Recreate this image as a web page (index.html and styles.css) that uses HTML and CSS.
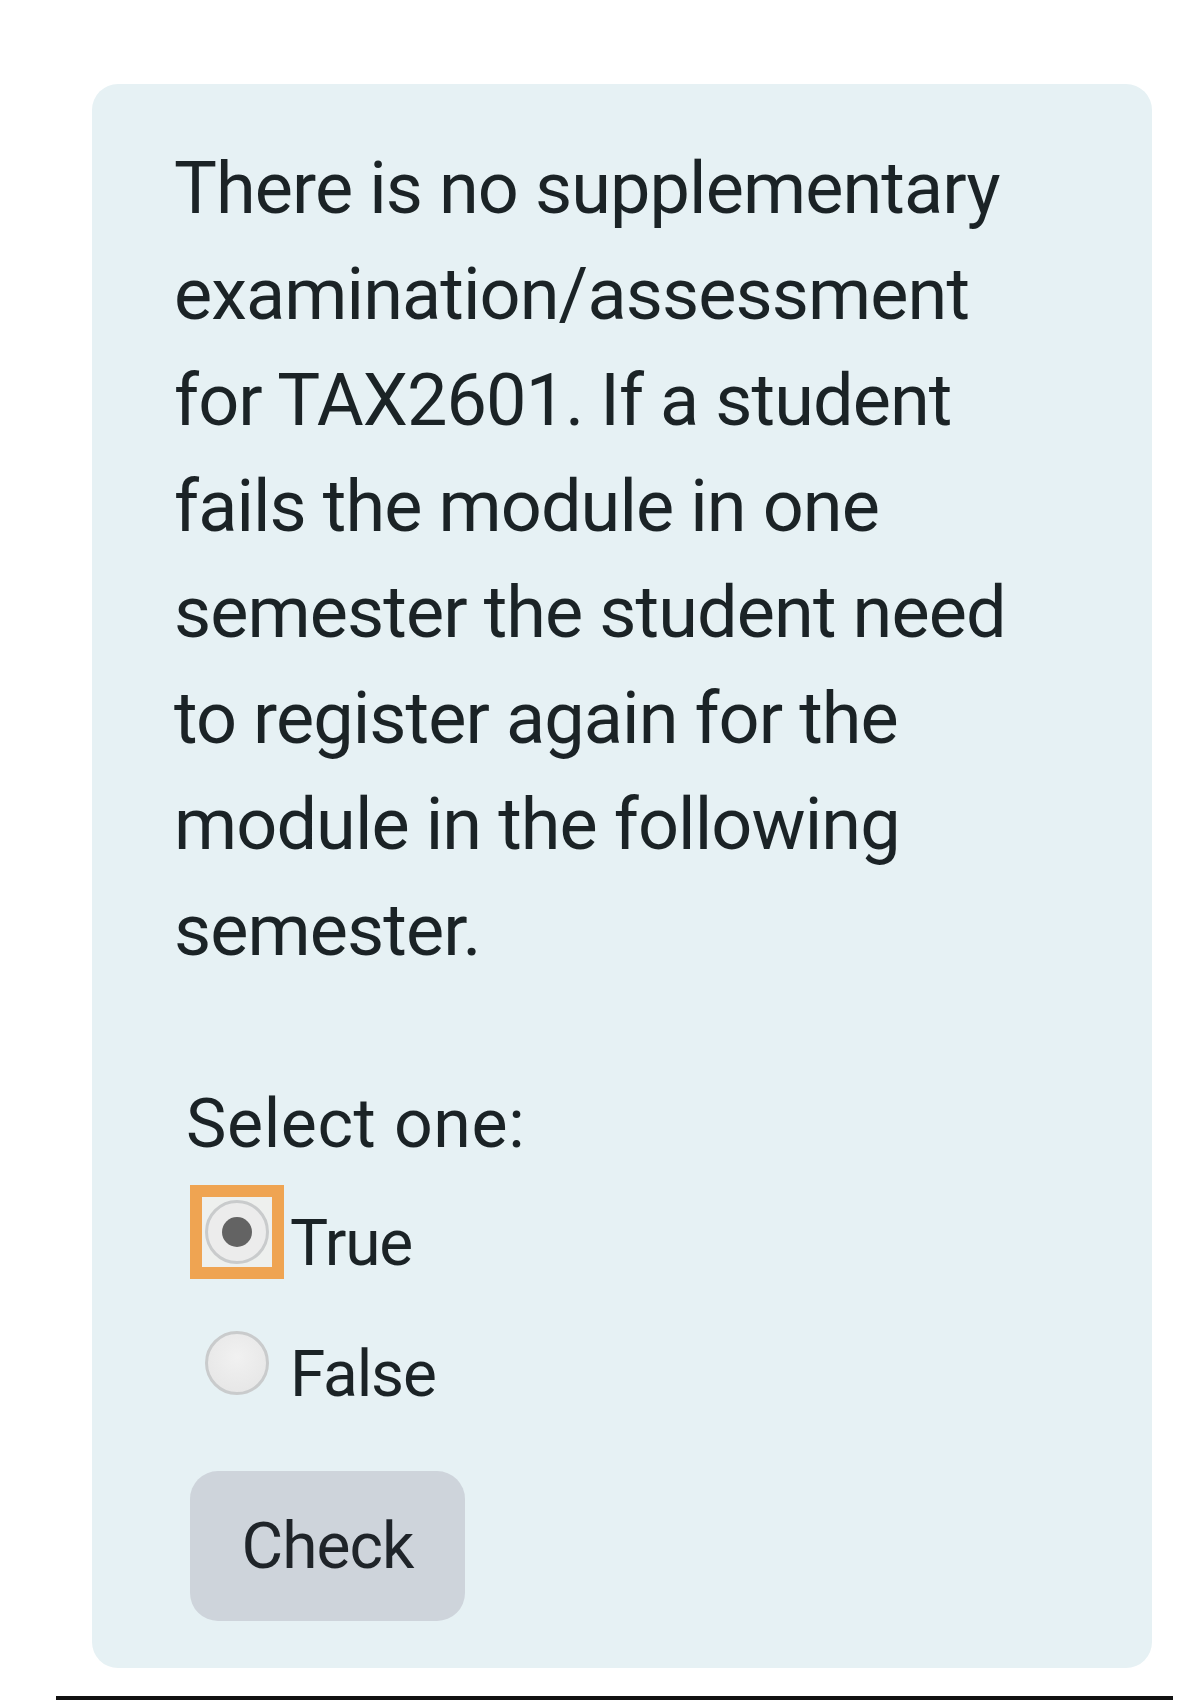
FILE: index.html
```html
<!DOCTYPE html>
<html lang="en">
<head>
<meta charset="utf-8">
<title>Question</title>
<link rel="stylesheet" href="styles.css">
</head>
<body>
<div class="page">
  <div class="card">
    <p class="qtext">There is no supplementary<br>examination/assessment<br>for TAX2601. If a student<br>fails the module in one<br>semester the student need<br>to register again for the<br>module in the following<br>semester.</p>
    <div class="prompt">Select one:</div>
    <div class="answers">
      <label class="opt">
        <span class="mark focused"><span class="radio checked"><span class="dot"></span></span></span>
        <span class="lbl">True</span>
      </label>
      <label class="opt">
        <span class="mark"><span class="radio"></span></span>
        <span class="lbl">False</span>
      </label>
    </div>
    <div class="actions">
      <button class="btn" type="button">Check</button>
    </div>
  </div>
  <div class="rule"></div>
</div>
</body>
</html>
```

FILE: styles.css
```css
html, body {
  margin: 0;
  padding: 0;
  background: #ffffff;
}
body {
  font-family: Roboto, "Liberation Sans", Arial, sans-serif;
  color: #1b2326;
}
.page {
  width: 1200px;
  height: 1700px;
  display: flex;
  flex-direction: column;
  overflow: hidden;
}
.card {
  margin: 84px 48px 0 92px;
  height: 1584px;
  box-sizing: border-box;
  background: #e6f1f4;
  border-radius: 26px;
  padding: 52px 40px 0 82px;
}
.qtext {
  margin: 0;
  font-size: 72px;
  line-height: 106px;
  letter-spacing: -0.9px;
}
.prompt {
  margin: 100px 0 0 12px;
  font-size: 68px;
  line-height: 80px;
  letter-spacing: 0.6px;
}
.answers {
  margin: 21px 0 0 16px;
  display: flex;
  flex-direction: column;
  gap: 37px;
}
.opt {
  display: flex;
  align-items: flex-start;
  height: 94px;
}
.mark {
  width: 94px;
  height: 94px;
  box-sizing: border-box;
  display: flex;
  align-items: center;
  justify-content: center;
  border: 12px solid transparent;
}
.mark.focused {
  border-color: #efa452;
  background: #eef0ee;
}
.radio {
  flex: none;
  width: 64px;
  height: 64px;
  box-sizing: border-box;
  border-radius: 50%;
  border: 3px solid #c9cbcc;
  background: radial-gradient(circle at 50% 40%, #f1f1f1 0%, #e4e4e4 100%);
  display: flex;
  align-items: center;
  justify-content: center;
}
.radio.checked {
  background: #ececec;
}
.dot {
  width: 30px;
  height: 30px;
  border-radius: 50%;
  background: #636363;
}
.lbl {
  margin: 12px 0 0 6px;
  font-size: 64px;
  line-height: 94px;
  letter-spacing: -1.2px;
}
.actions {
  margin: 61px 0 0 16px;
}
.btn {
  width: 275px;
  height: 150px;
  border: none;
  border-radius: 28px;
  background: #ced4db;
  color: #1f2429;
  font-family: Roboto, "Liberation Sans", Arial, sans-serif;
  font-size: 64px;
  letter-spacing: -1px;
  padding: 0;
}
.rule {
  margin: 28px 27px 0 56px;
  height: 4px;
  background: #111111;
}
```
